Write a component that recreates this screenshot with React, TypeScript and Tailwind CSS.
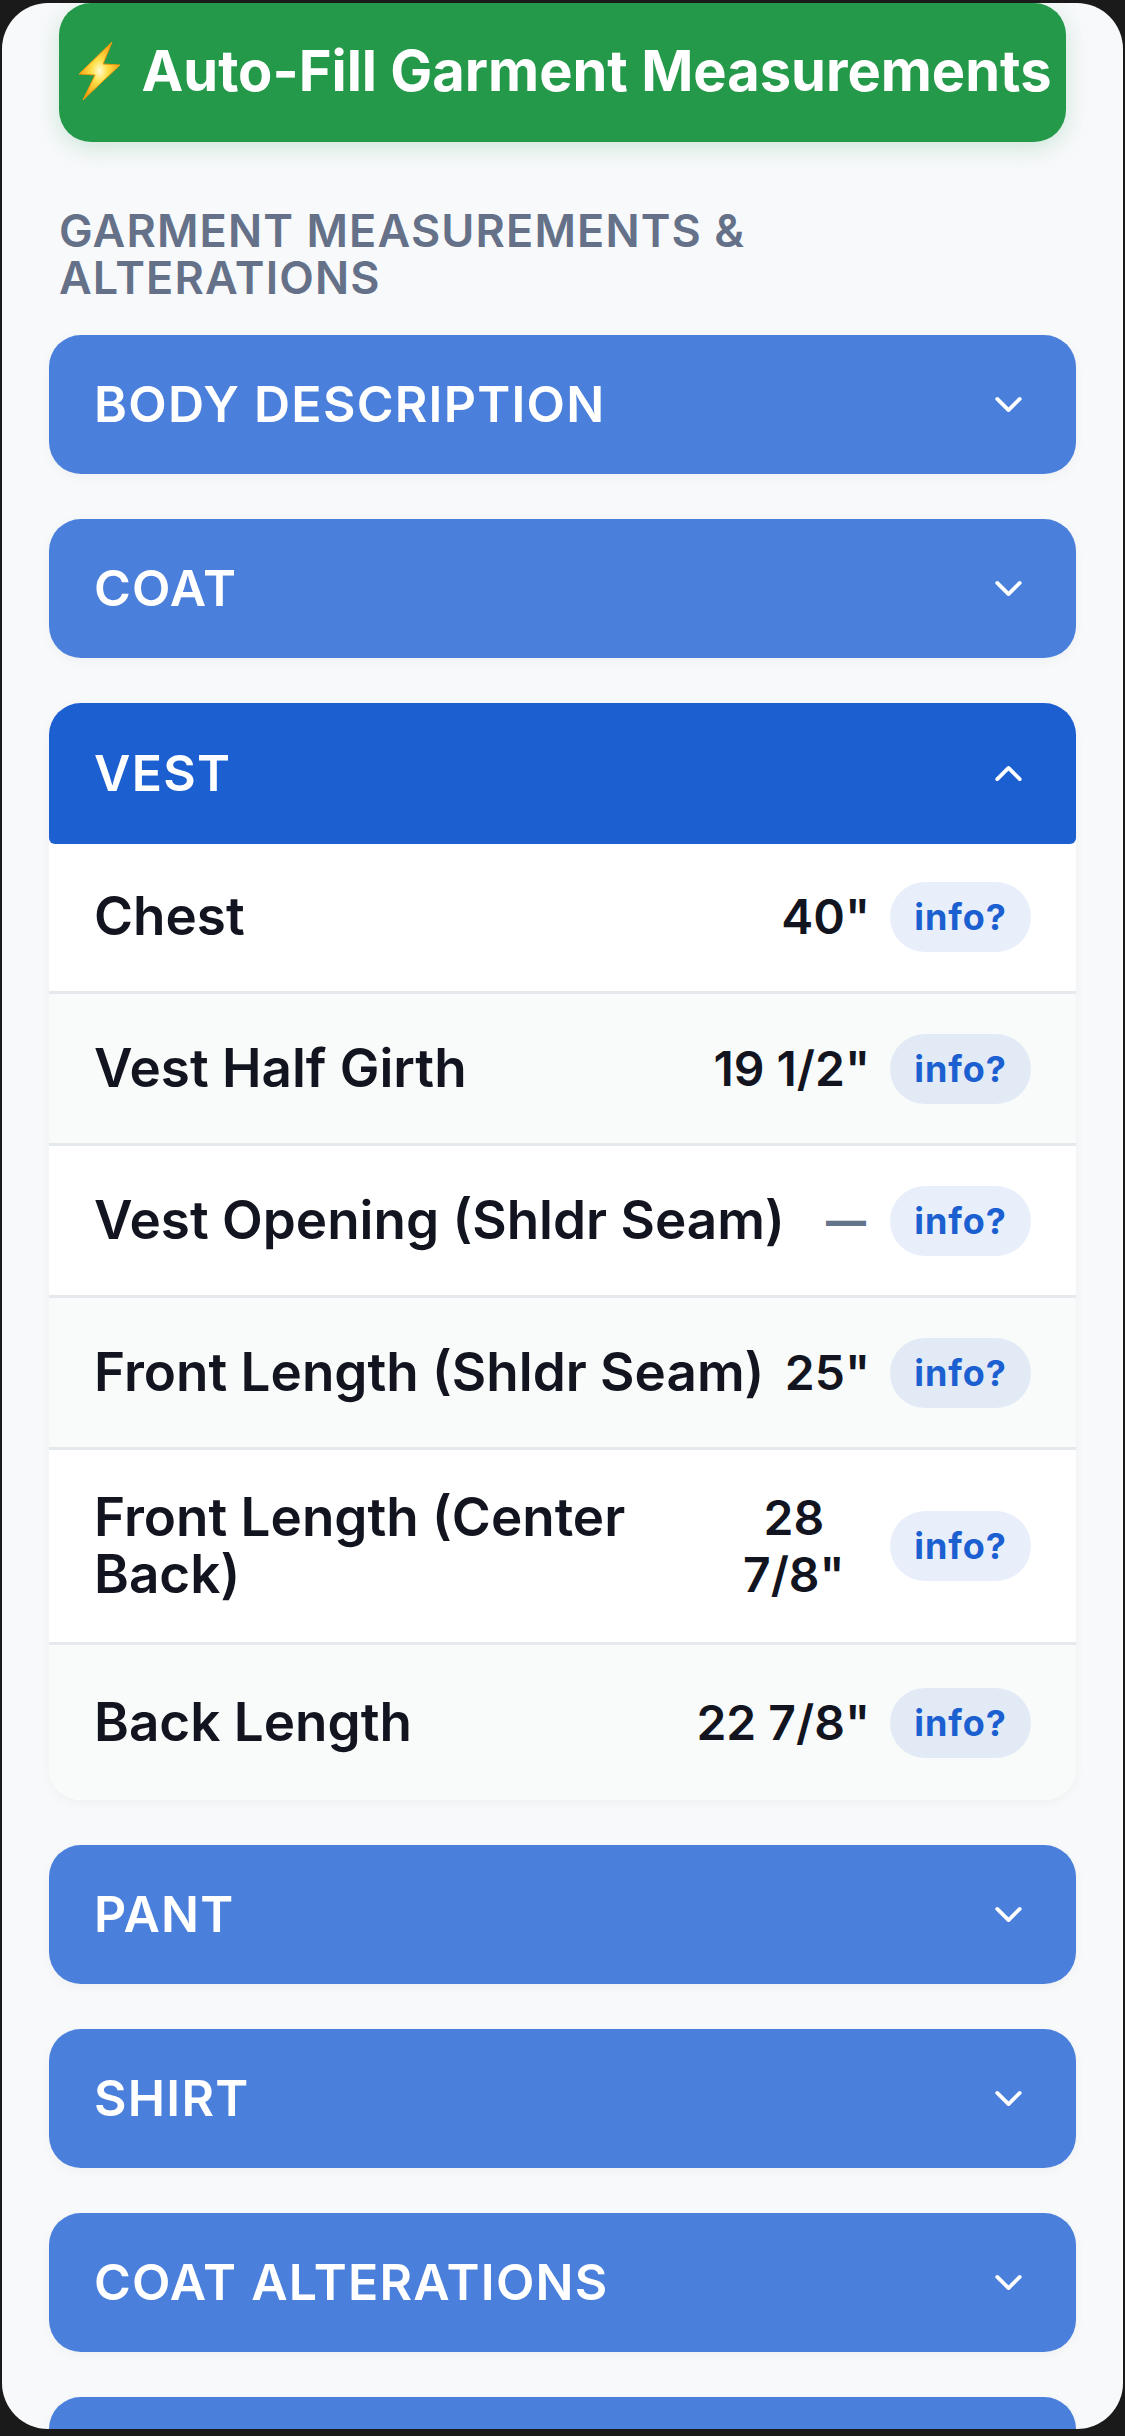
import { useState } from 'react';
import { ChevronDown, ChevronUp } from 'lucide-react';
import clsx from 'clsx';

interface Measurement {
  label: string;
  value?: string;
}

interface Section {
  title: string;
  rows: Measurement[];
}

const sections: Section[] = [
  { title: 'BODY DESCRIPTION', rows: [] },
  { title: 'COAT', rows: [] },
  {
    title: 'VEST',
    rows: [
      { label: 'Chest', value: '40"' },
      { label: 'Vest Half Girth', value: '19 1/2"' },
      { label: 'Vest Opening (Shldr Seam)' },
      { label: 'Front Length (Shldr Seam)', value: '25"' },
      { label: 'Front Length (Center Back)', value: '28 7/8"' },
      { label: 'Back Length', value: '22 7/8"' },
    ],
  },
  { title: 'PANT', rows: [] },
  { title: 'SHIRT', rows: [] },
  { title: 'COAT ALTERATIONS', rows: [] },
  { title: 'PANT ALTERATIONS', rows: [] },
];

function BoltIcon() {
  return (
    <svg width="48" height="60" viewBox="0 0 48 60" aria-hidden="true" className="shrink-0">
      <defs>
        <radialGradient id="bolt" cx="0.5" cy="0.5" r="0.55">
          <stop offset="0" stopColor="#fffbd0" />
          <stop offset="0.35" stopColor="#ffe04a" />
          <stop offset="1" stopColor="#f59a0c" />
        </radialGradient>
      </defs>
      <path
        d="M39 1 L6 33 L22 34 L10 59 L47 24 L30 23 Z"
        fill="url(#bolt)"
        stroke="#f29a10"
        strokeWidth="1"
        strokeLinejoin="round"
      />
    </svg>
  );
}

function MeasurementRow({ label, value }: Measurement) {
  return (
    <li className="flex min-h-[152px] items-center justify-between gap-5 border-b-3 border-[#e5e8ec] bg-white px-[45px] py-[39px] even:bg-[#f9fbfa] last:min-h-[155px] last:border-b-0">
      <span className="text-[53px] leading-[57px] font-semibold text-[#12151f]">{label}</span>
      <button
        type="button"
        className={clsx(
          'ml-auto text-center leading-[57px]',
          value ? 'text-[48px] font-semibold text-[#12151f]' : 'px-1 text-[40px] font-extrabold text-[#64748b]'
        )}
      >
        {value ?? '—'}
      </button>
      <button
        type="button"
        className="h-[70px] w-[141px] shrink-0 rounded-full bg-[#1c5fd1]/10 text-[36px] font-bold tracking-wide text-[#1c5fd1]"
      >
        info?
      </button>
    </li>
  );
}

export default function App() {
  const [open, setOpen] = useState('VEST');

  return (
    <div className="h-screen overflow-hidden bg-[#1a1a1a] px-[2px] pt-[3px] pb-[7px] font-['Inter',sans-serif]">
      <main className="h-full overflow-hidden rounded-[46px] bg-[#f8f9fb] px-[47px]">
        <div className="px-[10px]">
          <button
            type="button"
            className="flex h-[139px] w-full items-center justify-center gap-5 rounded-[32px] bg-[#25994a] pb-1 text-[56px] font-bold whitespace-nowrap text-white shadow-[0_6px_24px_rgba(37,153,74,0.2)]"
          >
            <BoltIcon />
            Auto-Fill Garment Measurements
          </button>
        </div>

        <h2 className="mt-[65px] mb-[34px] px-[10px] text-[45px] leading-[47px] font-semibold tracking-wide text-[#647188]">
          GARMENT MEASUREMENTS & ALTERATIONS
        </h2>

        <div className="flex flex-col gap-[45px]">
          {sections.map(({ title, rows }) => {
            const active = title === open;
            const Chevron = active ? ChevronUp : ChevronDown;
            return (
              <section
                key={title}
                className="overflow-hidden rounded-[32px] shadow-[0_3px_12px_rgba(0,0,0,0.04)]"
              >
                <button
                  type="button"
                  aria-expanded={active}
                  onClick={() => setOpen(active ? '' : title)}
                  className={clsx(
                    'relative flex w-full items-center justify-between px-[45px] text-[50px] font-semibold tracking-wide text-white',
                    active ? 'h-[141px] rounded-b-md bg-[#1c5fd1]' : 'h-[139px] bg-[#4a7fdb]'
                  )}
                >
                  {title}
                  <Chevron size={45} strokeWidth={2} />
                </button>
                {active && rows.length > 0 && (
                  <ul className="-mt-0.5 bg-white">
                    {rows.map((row) => (
                      <MeasurementRow key={row.label} {...row} />
                    ))}
                  </ul>
                )}
              </section>
            );
          })}
        </div>
      </main>
    </div>
  );
}
